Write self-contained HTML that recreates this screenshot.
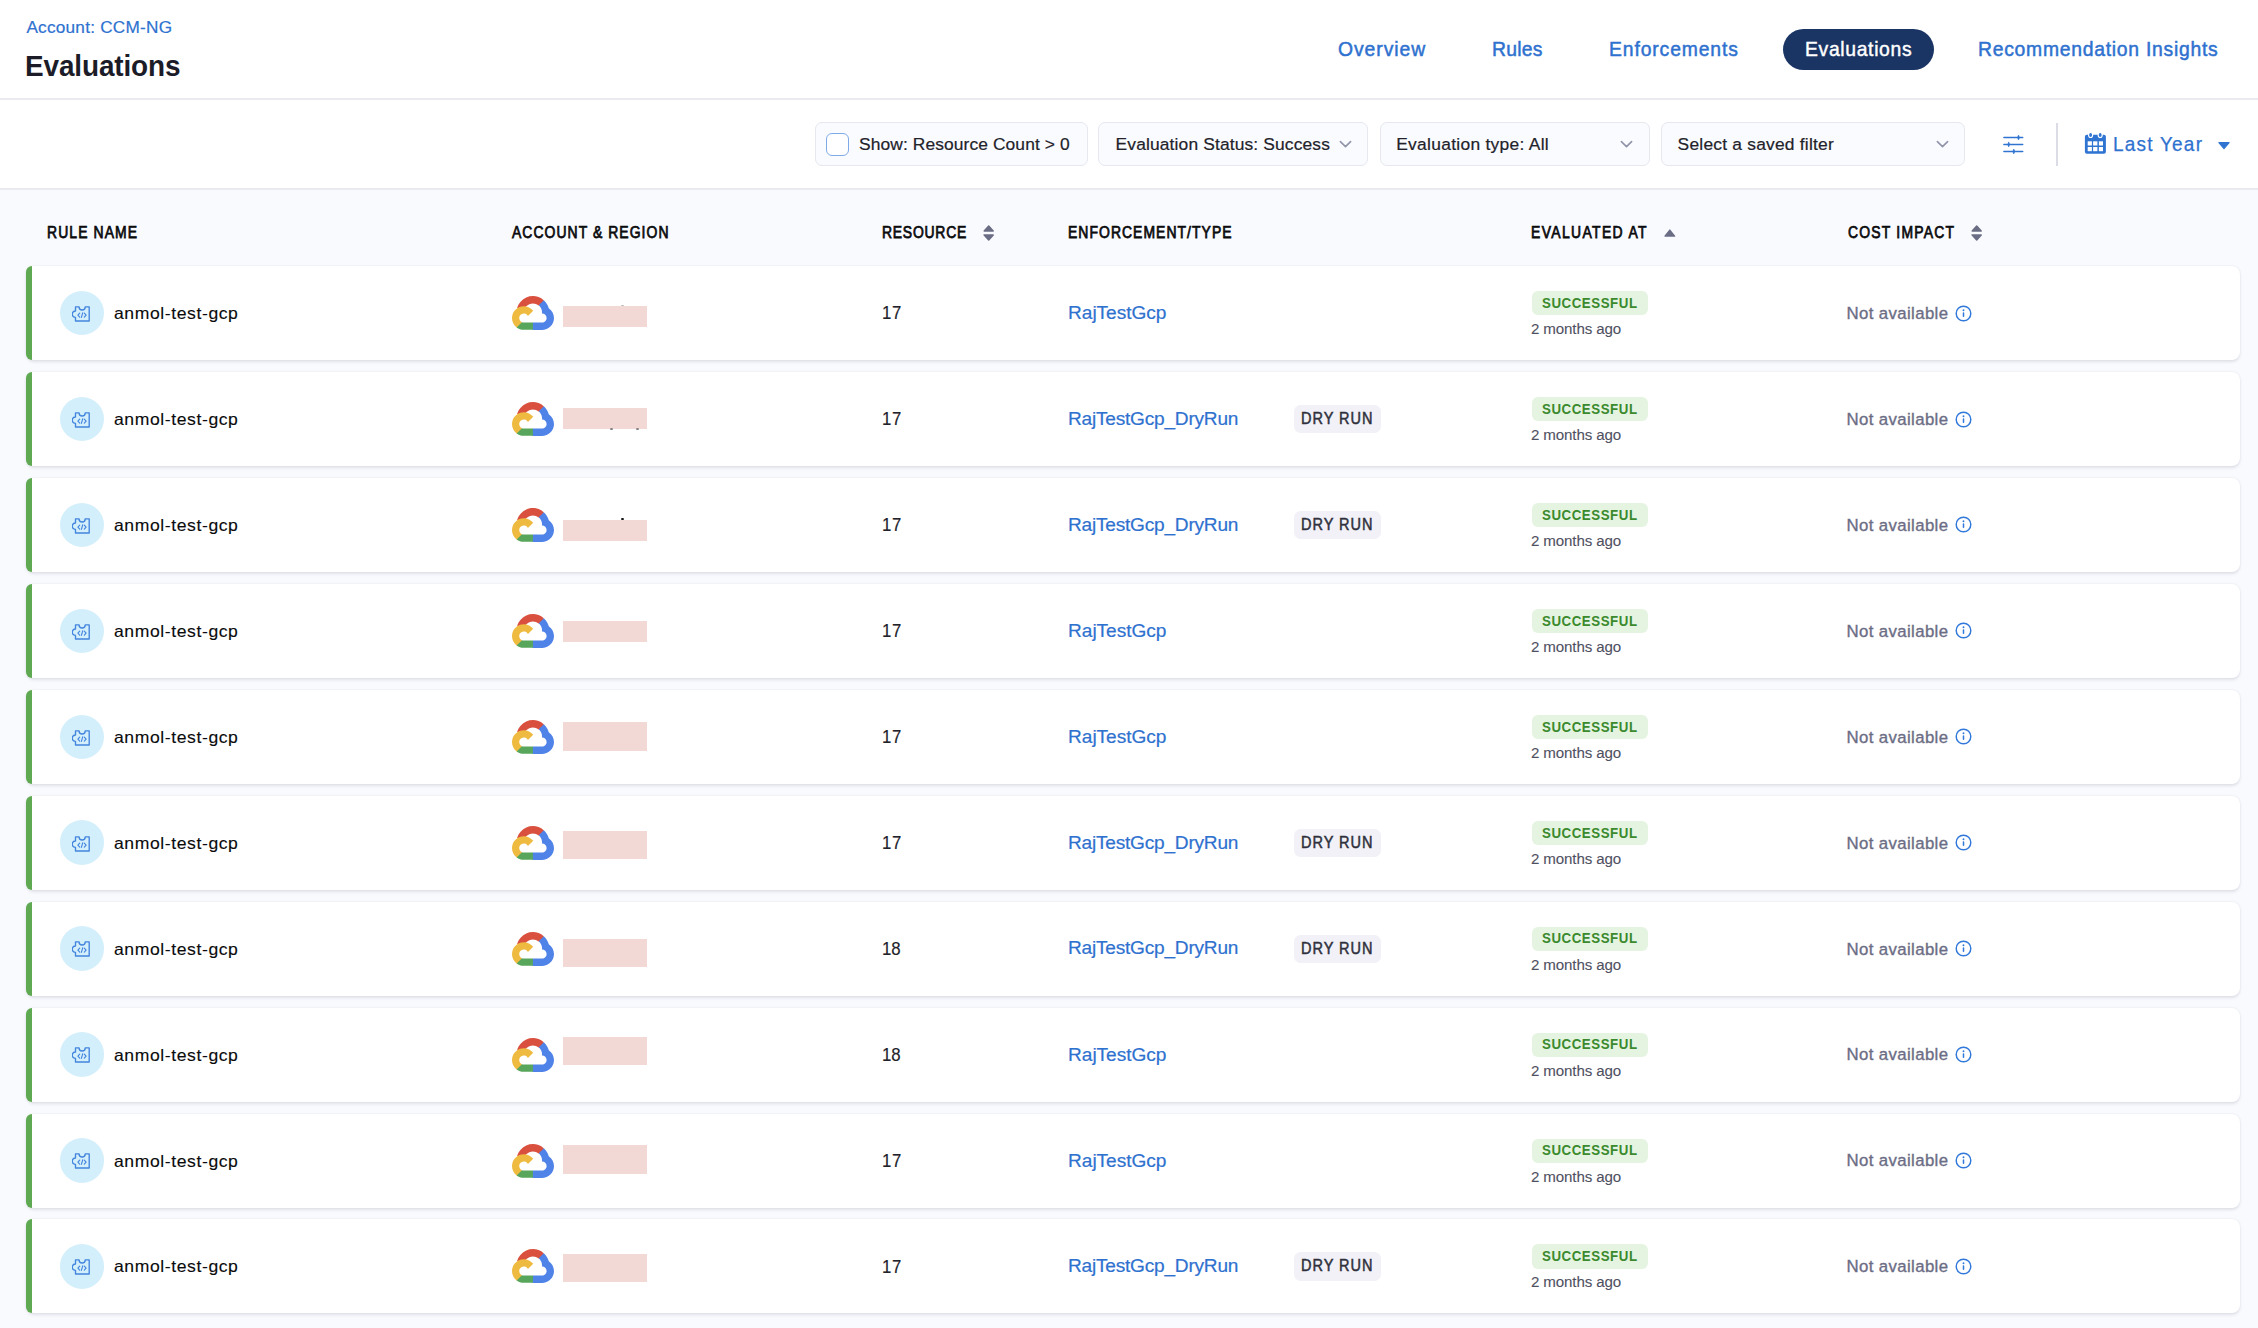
<!DOCTYPE html>
<html><head><meta charset="utf-8"><title>Evaluations</title>
<style>
*{box-sizing:border-box;margin:0;padding:0}
html,body{width:2258px;height:1328px;overflow:hidden}
body{background:#f9fafe;font-family:"Liberation Sans",sans-serif;position:relative}
.abs{position:absolute}
#header{position:absolute;left:0;top:0;width:2258px;height:100px;background:#fff;border-bottom:2px solid #eaeaf0}
#filters{position:absolute;left:0;top:100px;width:2258px;height:90px;background:#fff;border-bottom:2px solid #eaeaf0}
.pill{position:absolute;left:1782.5px;top:29.3px;width:151px;height:41px;border-radius:21px;background:#1a3464}
.fbox{position:absolute;top:122.4px;height:43.6px;background:#fafbfe;border:1.5px solid #e6e7ef;border-radius:7px}
.chk{position:absolute;left:826px;top:133px;width:22.6px;height:22.7px;border:1.8px solid #7eabe7;border-radius:6px;background:#fff}
.divider{position:absolute;left:2056.3px;top:122.6px;width:2px;height:43.6px;background:#dcdce6}
.card{position:absolute;left:26px;width:2214px;height:94px;background:#fff;border-radius:8px;
  box-shadow:0 0 2px rgba(40,41,61,.055),0 1.5px 3px rgba(96,97,112,.15)}
.bar{position:absolute;left:26px;width:6.2px;height:94px;background:#5ea952;border-radius:6px 0 0 6px}
.avatar{position:absolute;left:59.7px;width:44.5px;height:44.5px;border-radius:50%;background:#d3effb}
.code{position:absolute;left:72.2px}
.gcp{position:absolute;left:511.8px}
.pink{position:absolute;left:563px;width:84px;background:#f3d9d6}
.dry{position:absolute;left:1294.2px;width:87px;height:28.5px;border-radius:6.5px;background:#f1f1f7}
.succ{position:absolute;left:1531.7px;width:116.6px;height:24.4px;border-radius:6px;background:#e5f4e1}
.info{position:absolute;left:1954.5px}
.t{position:absolute;white-space:nowrap;line-height:80px;font-family:"Liberation Sans",sans-serif}
.dot{position:absolute;border-radius:50% 50% 40% 40%}

</style></head>
<body>
<svg width="0" height="0" style="position:absolute">
  <defs>
    <g id="gcplogo">
      <path fill="#d9503f" d="M1513.8 528.7h72.8l207.4-207.4 10.2-88c-385.9-340.6-975-303.9-1315.6 82C393.9 422.5 325.2 550 287.8 688c23.1-9.5 48.7-11 72.8-4.4l414.7-68.4s21.1-34.9 32-32.7c184.5-202.6 495-226.2 708.1-53.8h-1.6z"/>
      <path fill="#5083e8" d="M2089.4 688c-47.7-175.5-145.5-333.3-281.6-454l-291 291c122.9 100.4 192.9 251.7 189.9 410.4v51.7c143.1 0 259 116 259 259 0 143.1-116 259-259 259h-518.1l-51.7 52.4v310.7l51.7 51.7h518.1c297 2.3 560.5-190.2 648.4-473.9 87.7-283.8-20.5-591.9-266.4-758.1z"/>
      <path fill="#58a65c" d="M669.8 1917h518.1v-414.7H669.8c-36.9 0-73.4-7.9-107-23.3l-72.8 22.5-208.8 207.4-18.2 72.8c117.1 88.4 260 138.6 406.8 135.3z"/>
      <path fill="#eeba40" d="M669.8 571.6c-287.8 1.7-542.7 186-634.5 458.7-91.8 272.7-.3 573.7 227.8 749.6l300.5-300.5c-130.4-58.9-188.3-212.3-129.4-342.7 58.9-130.4 212.3-188.3 342.7-129.4 57.4 26 103.4 72 129.4 129.4l300.5-300.5c-127.9-167.1-326.6-264.8-537-264.6z"/>
    </g>
    <g id="codeicon" fill="none" stroke="#4485de" stroke-linejoin="round" stroke-linecap="round">
      <path stroke-width="1.35" d="M3.5 0.9H7.1A3.05 3.05 0 0 0 13.2 0.9H17.2V15H3.5V11.4A3.2 3.2 0 0 1 3.5 5Z"/>
      <path stroke-width="1.15" d="M7.7 7.1L5.9 9.1L7.7 11.1M10.7 6.9L9.4 11.3M12.3 7.1L14.1 9.1L12.3 11.1"/>
    </g>
    <g id="infoicon">
      <circle cx="8.5" cy="8.5" r="7.3" fill="none" stroke="#3078da" stroke-width="1.45"/>
      <circle cx="8.5" cy="5.2" r="0.95" fill="#3078da"/>
      <rect x="7.75" y="7.2" width="1.5" height="4.8" rx=".7" fill="#3078da"/>
    </g>
    <g id="sorticon" fill="#6b6d85" stroke="#6b6d85" stroke-width="1.5" stroke-linejoin="round">
      <path d="M5.7 1.1L10.2 6H1.2Z"/>
      <path d="M1.2 9.9H10.2L5.7 15Z"/>
    </g>
  </defs>
</svg>


<!-- page header: breadcrumb, title, tabs -->
<div class="page-header">
<div id="header">
  <div class="pill"></div>
</div>


<div class="t" style="left:26.40px;top:-12.90px;font-size:17.2px;font-weight:400;letter-spacing:0.236px;color:#2e71cf;-webkit-text-stroke:0.2px #2e71cf;">Account: CCM-NG</div>
<div class="t" style="left:25.30px;top:26.20px;font-size:29.4px;font-weight:700;letter-spacing:-0.126px;color:#1c1c28;transform:scaleX(0.9500);transform-origin:0 0;">Evaluations</div>
<div class="t" style="left:1338.17px;top:9.00px;font-size:20.8px;font-weight:400;letter-spacing:1.002px;color:#2e71cf;-webkit-text-stroke:0.5px #2e71cf;transform:scaleX(0.9300);transform-origin:0 0;">Overview</div>
<div class="t" style="left:1492.47px;top:9.00px;font-size:20.8px;font-weight:400;letter-spacing:0.253px;color:#2e71cf;-webkit-text-stroke:0.5px #2e71cf;transform:scaleX(0.9300);transform-origin:0 0;">Rules</div>
<div class="t" style="left:1609.37px;top:9.00px;font-size:20.8px;font-weight:400;letter-spacing:0.937px;color:#2e71cf;-webkit-text-stroke:0.5px #2e71cf;transform:scaleX(0.9300);transform-origin:0 0;">Enforcements</div>
<div class="t" style="left:1804.77px;top:9.30px;font-size:20.8px;font-weight:400;letter-spacing:0.712px;color:#ffffff;-webkit-text-stroke:0.45px #ffffff;transform:scaleX(0.9300);transform-origin:0 0;">Evaluations</div>
<div class="t" style="left:1977.67px;top:9.00px;font-size:20.8px;font-weight:400;letter-spacing:0.788px;color:#2e71cf;-webkit-text-stroke:0.5px #2e71cf;transform:scaleX(0.9300);transform-origin:0 0;">Recommendation Insights</div>
</div>
<!-- filter bar -->
<div class="filter-bar">
<div id="filters">
</div>
<div class="fbox" style="left:814.6px;width:273px"></div>
<div class="chk"></div>
<div class="fbox" style="left:1098.2px;width:269.8px"></div>
<div class="fbox" style="left:1380px;width:269.7px"></div>
<div class="fbox" style="left:1661.3px;width:303.4px"></div>
<svg class="abs" style="left:1338px;top:139px" width="15" height="10" viewBox="0 0 15 10"><path d="M2.4 2.6L7.5 7.6L12.6 2.6" fill="none" stroke="#9193aa" stroke-width="1.6" stroke-linecap="round" stroke-linejoin="round"/></svg>
<svg class="abs" style="left:1619px;top:139px" width="15" height="10" viewBox="0 0 15 10"><path d="M2.4 2.6L7.5 7.6L12.6 2.6" fill="none" stroke="#9193aa" stroke-width="1.6" stroke-linecap="round" stroke-linejoin="round"/></svg>
<svg class="abs" style="left:1934.7px;top:139px" width="15" height="10" viewBox="0 0 15 10"><path d="M2.4 2.6L7.5 7.6L12.6 2.6" fill="none" stroke="#9193aa" stroke-width="1.6" stroke-linecap="round" stroke-linejoin="round"/></svg>
<!-- sliders -->
<svg class="abs" style="left:2002px;top:133px" width="23" height="22" viewBox="0 0 23 22">
  <path d="M1.9 4.5H20.7M1.9 11.5H20.7M1.9 18.5H20.7" fill="none" stroke="#3074d2" stroke-width="1.5" stroke-linecap="round"/>
  <path d="M16.5 2.1L17.5 4.5L16.5 7L15.5 4.5Z M6.7 8.9L7.7 11.5L6.7 13.9L5.7 11.5Z M11.8 16L12.8 18.5L11.8 20.9L10.8 18.5Z" fill="#3074d2" stroke="#3074d2" stroke-width="0.6" stroke-linejoin="round"/>
</svg>
<div class="divider"></div>
<!-- calendar -->
<svg class="abs" style="left:2084px;top:131px" width="23" height="24" viewBox="0 0 23 24">
  <rect x="0.9" y="3.8" width="21" height="19" rx="2" fill="#3074d2"/>
  <g fill="#fff">
    <rect x="3.7" y="10.3" width="4.2" height="4.2"/><rect x="9.1" y="10.3" width="4.3" height="4.2"/><rect x="14.9" y="10.3" width="4.1" height="4.2"/>
    <rect x="3.7" y="16" width="4.2" height="4.2"/><rect x="9.1" y="16" width="4.3" height="4.2"/><rect x="14.9" y="16" width="4.1" height="4.2"/>
  </g>
  <ellipse cx="6.6" cy="4" rx="2.6" ry="3.1" fill="#fff"/>
  <ellipse cx="16.2" cy="4" rx="2.6" ry="3.1" fill="#fff"/>
  <ellipse cx="6.6" cy="4" rx="1.45" ry="2.1" fill="#3074d2"/>
  <ellipse cx="16.2" cy="4" rx="1.45" ry="2.1" fill="#3074d2"/>
</svg>
<svg class="abs" style="left:2217px;top:140.5px" width="14" height="9" viewBox="0 0 14 9"><path d="M1.9 1.6H12.1L7 7.6Z" fill="#3074d2" stroke="#3074d2" stroke-width="1.2" stroke-linejoin="round"/></svg>


<div class="t" style="left:859.00px;top:103.90px;font-size:17.4px;font-weight:400;letter-spacing:0.100px;color:#22222a;-webkit-text-stroke:0.2px #22222a;">Show: Resource Count &gt; 0</div>
<div class="t" style="left:1115.60px;top:103.90px;font-size:17.4px;font-weight:400;letter-spacing:0.140px;color:#22222a;-webkit-text-stroke:0.2px #22222a;">Evaluation Status: Success</div>
<div class="t" style="left:1396.20px;top:103.90px;font-size:17.4px;font-weight:400;letter-spacing:0.295px;color:#22222a;-webkit-text-stroke:0.2px #22222a;">Evaluation type: All</div>
<div class="t" style="left:1677.60px;top:103.90px;font-size:17.4px;font-weight:400;letter-spacing:0.220px;color:#22222a;-webkit-text-stroke:0.2px #22222a;">Select a saved filter</div>
<div class="t" style="left:2112.77px;top:104.30px;font-size:20.4px;font-weight:400;letter-spacing:1.328px;color:#2e71cf;-webkit-text-stroke:0.25px #2e71cf;transform:scaleX(0.9300);transform-origin:0 0;">Last Year</div>
</div>
<!-- table column headers -->
<div class="table-head">
<!-- table header sort icons -->
<svg class="abs" style="left:983px;top:225.2px" width="12" height="16" viewBox="0 0 12 16"><use href="#sorticon"/></svg>
<svg class="abs" style="left:1663.6px;top:229px" width="12" height="9" viewBox="0 0 12 9"><path d="M5.8 1.1L10.6 7.1H1Z" fill="#6b6d85" stroke="#6b6d85" stroke-width="1.4" stroke-linejoin="round"/></svg>
<svg class="abs" style="left:1970.9px;top:225.4px" width="12" height="16" viewBox="0 0 12 16"><use href="#sorticon"/></svg>

<div class="t" style="left:47.34px;top:191.90px;font-size:16.2px;font-weight:400;letter-spacing:1.288px;color:#0b0b0d;-webkit-text-stroke:0.75px #0b0b0d;transform:scaleX(0.8600);transform-origin:0 0;">RULE NAME</div>
<div class="t" style="left:512.00px;top:191.90px;font-size:16.2px;font-weight:400;letter-spacing:1.234px;color:#0b0b0d;-webkit-text-stroke:0.75px #0b0b0d;transform:scaleX(0.8600);transform-origin:0 0;">ACCOUNT &amp; REGION</div>
<div class="t" style="left:881.94px;top:191.90px;font-size:16.2px;font-weight:400;letter-spacing:0.887px;color:#0b0b0d;-webkit-text-stroke:0.75px #0b0b0d;transform:scaleX(0.8600);transform-origin:0 0;">RESOURCE</div>
<div class="t" style="left:1068.04px;top:191.90px;font-size:16.2px;font-weight:400;letter-spacing:1.228px;color:#0b0b0d;-webkit-text-stroke:0.75px #0b0b0d;transform:scaleX(0.8600);transform-origin:0 0;">ENFORCEMENT/TYPE</div>
<div class="t" style="left:1531.44px;top:191.90px;font-size:16.2px;font-weight:400;letter-spacing:1.590px;color:#0b0b0d;-webkit-text-stroke:0.75px #0b0b0d;transform:scaleX(0.8600);transform-origin:0 0;">EVALUATED AT</div>
<div class="t" style="left:1847.80px;top:191.90px;font-size:16.2px;font-weight:400;letter-spacing:1.414px;color:#0b0b0d;-webkit-text-stroke:0.75px #0b0b0d;transform:scaleX(0.8600);transform-origin:0 0;">COST IMPACT</div>
</div>
<!-- table rows -->
<div class="table-body">
<div class="row">
<div class="card" style="top:266px"></div>
<div class="bar" style="top:266px"></div>
<div class="avatar" style="top:290.75px"></div>
<svg class="code" style="top:305.80px" width="18" height="16" viewBox="0 0 18 16"><use href="#codeicon"/></svg>
<svg class="gcp" style="top:296.00px" width="42" height="34" viewBox="0 0 2385.7 1919.9"><use href="#gcplogo"/></svg>
<div class="pink" style="top:306px;height:21.0px"></div>
<div class="dot" style="left:621.3px;top:304.7px;width:2.6px;height:1.6px;background:#b8b8b8"></div>
<div class="succ" style="top:291.00px"></div>
<svg class="info" style="top:304.60px" width="17" height="17" viewBox="0 0 17 17"><use href="#infoicon"/></svg>
<div class="t" style="left:114.43px;top:273.00px;font-size:16.5px;font-weight:400;letter-spacing:0.547px;color:#0b0b0d;-webkit-text-stroke:0.12px #0b0b0d;transform:scaleX(1.0659);transform-origin:0 0;">anmol-test-gcp</div>
<div class="t" style="left:882.42px;top:273.20px;font-size:19.1px;font-weight:400;letter-spacing:0.659px;color:#22222a;-webkit-text-stroke:0.15px #22222a;transform:scaleX(0.8800);transform-origin:0 0;">17</div>
<div class="t" style="left:1068.10px;top:273.20px;font-size:19.1px;font-weight:400;letter-spacing:-0.044px;color:#2e71cf;-webkit-text-stroke:0.2px #2e71cf;">RajTestGcp</div>
<div class="t" style="left:1542.12px;top:262.80px;font-size:15.1px;font-weight:700;letter-spacing:0.634px;color:#3b8a2e;transform:scaleX(0.8800);transform-origin:0 0;">SUCCESSFUL</div>
<div class="t" style="left:1531.00px;top:289.00px;font-size:15.1px;font-weight:400;letter-spacing:-0.127px;color:#4f5162;-webkit-text-stroke:0.1px #4f5162;">2 months ago</div>
<div class="t" style="left:1846.60px;top:273.90px;font-size:16.8px;font-weight:400;letter-spacing:0.367px;color:#6b6d85;-webkit-text-stroke:0.35px #6b6d85;">Not available</div>
</div>
<div class="row">
<div class="card" style="top:372px"></div>
<div class="bar" style="top:372px"></div>
<div class="avatar" style="top:396.69px"></div>
<svg class="code" style="top:411.74px" width="18" height="16" viewBox="0 0 18 16"><use href="#codeicon"/></svg>
<svg class="gcp" style="top:401.94px" width="42" height="34" viewBox="0 0 2385.7 1919.9"><use href="#gcplogo"/></svg>
<div class="pink" style="top:408px;height:20.5px"></div>
<div class="dot" style="left:609.9px;top:428.3px;width:3px;height:1.8px;background:#808080"></div>
<div class="dot" style="left:635.6px;top:428.3px;width:3px;height:1.8px;background:#808080"></div>
<div class="dry" style="top:404.94px"></div>
<div class="succ" style="top:396.94px"></div>
<svg class="info" style="top:410.54px" width="17" height="17" viewBox="0 0 17 17"><use href="#infoicon"/></svg>
<div class="t" style="left:114.43px;top:378.94px;font-size:16.5px;font-weight:400;letter-spacing:0.547px;color:#0b0b0d;-webkit-text-stroke:0.12px #0b0b0d;transform:scaleX(1.0659);transform-origin:0 0;">anmol-test-gcp</div>
<div class="t" style="left:882.42px;top:379.14px;font-size:19.1px;font-weight:400;letter-spacing:0.659px;color:#22222a;-webkit-text-stroke:0.15px #22222a;transform:scaleX(0.8800);transform-origin:0 0;">17</div>
<div class="t" style="left:1068.00px;top:378.74px;font-size:19.1px;font-weight:400;letter-spacing:-0.225px;color:#2e71cf;-webkit-text-stroke:0.2px #2e71cf;">RajTestGcp_DryRun</div>
<div class="t" style="left:1301.33px;top:378.84px;font-size:16.7px;font-weight:400;letter-spacing:1.109px;color:#2f303c;-webkit-text-stroke:0.5px #2f303c;transform:scaleX(0.8700);transform-origin:0 0;">DRY RUN</div>
<div class="t" style="left:1542.12px;top:368.74px;font-size:15.1px;font-weight:700;letter-spacing:0.634px;color:#3b8a2e;transform:scaleX(0.8800);transform-origin:0 0;">SUCCESSFUL</div>
<div class="t" style="left:1531.00px;top:394.94px;font-size:15.1px;font-weight:400;letter-spacing:-0.127px;color:#4f5162;-webkit-text-stroke:0.1px #4f5162;">2 months ago</div>
<div class="t" style="left:1846.60px;top:379.84px;font-size:16.8px;font-weight:400;letter-spacing:0.367px;color:#6b6d85;-webkit-text-stroke:0.35px #6b6d85;">Not available</div>
</div>
<div class="row">
<div class="card" style="top:478px"></div>
<div class="bar" style="top:478px"></div>
<div class="avatar" style="top:502.63px"></div>
<svg class="code" style="top:517.68px" width="18" height="16" viewBox="0 0 18 16"><use href="#codeicon"/></svg>
<svg class="gcp" style="top:507.88px" width="42" height="34" viewBox="0 0 2385.7 1919.9"><use href="#gcplogo"/></svg>
<div class="pink" style="top:520px;height:21.0px"></div>
<div class="dot" style="left:621.1px;top:517.6px;width:3px;height:2.6px;background:#151515"></div>
<div class="dry" style="top:510.88px"></div>
<div class="succ" style="top:502.88px"></div>
<svg class="info" style="top:516.48px" width="17" height="17" viewBox="0 0 17 17"><use href="#infoicon"/></svg>
<div class="t" style="left:114.43px;top:484.88px;font-size:16.5px;font-weight:400;letter-spacing:0.547px;color:#0b0b0d;-webkit-text-stroke:0.12px #0b0b0d;transform:scaleX(1.0659);transform-origin:0 0;">anmol-test-gcp</div>
<div class="t" style="left:882.42px;top:485.08px;font-size:19.1px;font-weight:400;letter-spacing:0.659px;color:#22222a;-webkit-text-stroke:0.15px #22222a;transform:scaleX(0.8800);transform-origin:0 0;">17</div>
<div class="t" style="left:1068.00px;top:484.68px;font-size:19.1px;font-weight:400;letter-spacing:-0.225px;color:#2e71cf;-webkit-text-stroke:0.2px #2e71cf;">RajTestGcp_DryRun</div>
<div class="t" style="left:1301.33px;top:484.78px;font-size:16.7px;font-weight:400;letter-spacing:1.109px;color:#2f303c;-webkit-text-stroke:0.5px #2f303c;transform:scaleX(0.8700);transform-origin:0 0;">DRY RUN</div>
<div class="t" style="left:1542.12px;top:474.68px;font-size:15.1px;font-weight:700;letter-spacing:0.634px;color:#3b8a2e;transform:scaleX(0.8800);transform-origin:0 0;">SUCCESSFUL</div>
<div class="t" style="left:1531.00px;top:500.88px;font-size:15.1px;font-weight:400;letter-spacing:-0.127px;color:#4f5162;-webkit-text-stroke:0.1px #4f5162;">2 months ago</div>
<div class="t" style="left:1846.60px;top:485.78px;font-size:16.8px;font-weight:400;letter-spacing:0.367px;color:#6b6d85;-webkit-text-stroke:0.35px #6b6d85;">Not available</div>
</div>
<div class="row">
<div class="card" style="top:584px"></div>
<div class="bar" style="top:584px"></div>
<div class="avatar" style="top:608.57px"></div>
<svg class="code" style="top:623.62px" width="18" height="16" viewBox="0 0 18 16"><use href="#codeicon"/></svg>
<svg class="gcp" style="top:613.82px" width="42" height="34" viewBox="0 0 2385.7 1919.9"><use href="#gcplogo"/></svg>
<div class="pink" style="top:621px;height:21.4px"></div>
<div class="succ" style="top:608.82px"></div>
<svg class="info" style="top:622.42px" width="17" height="17" viewBox="0 0 17 17"><use href="#infoicon"/></svg>
<div class="t" style="left:114.43px;top:590.82px;font-size:16.5px;font-weight:400;letter-spacing:0.547px;color:#0b0b0d;-webkit-text-stroke:0.12px #0b0b0d;transform:scaleX(1.0659);transform-origin:0 0;">anmol-test-gcp</div>
<div class="t" style="left:882.42px;top:591.02px;font-size:19.1px;font-weight:400;letter-spacing:0.659px;color:#22222a;-webkit-text-stroke:0.15px #22222a;transform:scaleX(0.8800);transform-origin:0 0;">17</div>
<div class="t" style="left:1068.10px;top:591.02px;font-size:19.1px;font-weight:400;letter-spacing:-0.044px;color:#2e71cf;-webkit-text-stroke:0.2px #2e71cf;">RajTestGcp</div>
<div class="t" style="left:1542.12px;top:580.62px;font-size:15.1px;font-weight:700;letter-spacing:0.634px;color:#3b8a2e;transform:scaleX(0.8800);transform-origin:0 0;">SUCCESSFUL</div>
<div class="t" style="left:1531.00px;top:606.82px;font-size:15.1px;font-weight:400;letter-spacing:-0.127px;color:#4f5162;-webkit-text-stroke:0.1px #4f5162;">2 months ago</div>
<div class="t" style="left:1846.60px;top:591.72px;font-size:16.8px;font-weight:400;letter-spacing:0.367px;color:#6b6d85;-webkit-text-stroke:0.35px #6b6d85;">Not available</div>
</div>
<div class="row">
<div class="card" style="top:690px"></div>
<div class="bar" style="top:690px"></div>
<div class="avatar" style="top:714.51px"></div>
<svg class="code" style="top:729.56px" width="18" height="16" viewBox="0 0 18 16"><use href="#codeicon"/></svg>
<svg class="gcp" style="top:719.76px" width="42" height="34" viewBox="0 0 2385.7 1919.9"><use href="#gcplogo"/></svg>
<div class="pink" style="top:722px;height:29.0px"></div>
<div class="succ" style="top:714.76px"></div>
<svg class="info" style="top:728.36px" width="17" height="17" viewBox="0 0 17 17"><use href="#infoicon"/></svg>
<div class="t" style="left:114.43px;top:696.76px;font-size:16.5px;font-weight:400;letter-spacing:0.547px;color:#0b0b0d;-webkit-text-stroke:0.12px #0b0b0d;transform:scaleX(1.0659);transform-origin:0 0;">anmol-test-gcp</div>
<div class="t" style="left:882.42px;top:696.96px;font-size:19.1px;font-weight:400;letter-spacing:0.659px;color:#22222a;-webkit-text-stroke:0.15px #22222a;transform:scaleX(0.8800);transform-origin:0 0;">17</div>
<div class="t" style="left:1068.10px;top:696.96px;font-size:19.1px;font-weight:400;letter-spacing:-0.044px;color:#2e71cf;-webkit-text-stroke:0.2px #2e71cf;">RajTestGcp</div>
<div class="t" style="left:1542.12px;top:686.56px;font-size:15.1px;font-weight:700;letter-spacing:0.634px;color:#3b8a2e;transform:scaleX(0.8800);transform-origin:0 0;">SUCCESSFUL</div>
<div class="t" style="left:1531.00px;top:712.76px;font-size:15.1px;font-weight:400;letter-spacing:-0.127px;color:#4f5162;-webkit-text-stroke:0.1px #4f5162;">2 months ago</div>
<div class="t" style="left:1846.60px;top:697.66px;font-size:16.8px;font-weight:400;letter-spacing:0.367px;color:#6b6d85;-webkit-text-stroke:0.35px #6b6d85;">Not available</div>
</div>
<div class="row">
<div class="card" style="top:796px"></div>
<div class="bar" style="top:796px"></div>
<div class="avatar" style="top:820.45px"></div>
<svg class="code" style="top:835.50px" width="18" height="16" viewBox="0 0 18 16"><use href="#codeicon"/></svg>
<svg class="gcp" style="top:825.70px" width="42" height="34" viewBox="0 0 2385.7 1919.9"><use href="#gcplogo"/></svg>
<div class="pink" style="top:830.7px;height:28.3px"></div>
<div class="dry" style="top:828.70px"></div>
<div class="succ" style="top:820.70px"></div>
<svg class="info" style="top:834.30px" width="17" height="17" viewBox="0 0 17 17"><use href="#infoicon"/></svg>
<div class="t" style="left:114.43px;top:802.70px;font-size:16.5px;font-weight:400;letter-spacing:0.547px;color:#0b0b0d;-webkit-text-stroke:0.12px #0b0b0d;transform:scaleX(1.0659);transform-origin:0 0;">anmol-test-gcp</div>
<div class="t" style="left:882.42px;top:802.90px;font-size:19.1px;font-weight:400;letter-spacing:0.659px;color:#22222a;-webkit-text-stroke:0.15px #22222a;transform:scaleX(0.8800);transform-origin:0 0;">17</div>
<div class="t" style="left:1068.00px;top:802.50px;font-size:19.1px;font-weight:400;letter-spacing:-0.225px;color:#2e71cf;-webkit-text-stroke:0.2px #2e71cf;">RajTestGcp_DryRun</div>
<div class="t" style="left:1301.33px;top:802.60px;font-size:16.7px;font-weight:400;letter-spacing:1.109px;color:#2f303c;-webkit-text-stroke:0.5px #2f303c;transform:scaleX(0.8700);transform-origin:0 0;">DRY RUN</div>
<div class="t" style="left:1542.12px;top:792.50px;font-size:15.1px;font-weight:700;letter-spacing:0.634px;color:#3b8a2e;transform:scaleX(0.8800);transform-origin:0 0;">SUCCESSFUL</div>
<div class="t" style="left:1531.00px;top:818.70px;font-size:15.1px;font-weight:400;letter-spacing:-0.127px;color:#4f5162;-webkit-text-stroke:0.1px #4f5162;">2 months ago</div>
<div class="t" style="left:1846.60px;top:803.60px;font-size:16.8px;font-weight:400;letter-spacing:0.367px;color:#6b6d85;-webkit-text-stroke:0.35px #6b6d85;">Not available</div>
</div>
<div class="row">
<div class="card" style="top:902px"></div>
<div class="bar" style="top:902px"></div>
<div class="avatar" style="top:926.39px"></div>
<svg class="code" style="top:941.44px" width="18" height="16" viewBox="0 0 18 16"><use href="#codeicon"/></svg>
<svg class="gcp" style="top:931.64px" width="42" height="34" viewBox="0 0 2385.7 1919.9"><use href="#gcplogo"/></svg>
<div class="pink" style="top:938.8px;height:28.5px"></div>
<div class="dry" style="top:934.64px"></div>
<div class="succ" style="top:926.64px"></div>
<svg class="info" style="top:940.24px" width="17" height="17" viewBox="0 0 17 17"><use href="#infoicon"/></svg>
<div class="t" style="left:114.43px;top:908.64px;font-size:16.5px;font-weight:400;letter-spacing:0.547px;color:#0b0b0d;-webkit-text-stroke:0.12px #0b0b0d;transform:scaleX(1.0659);transform-origin:0 0;">anmol-test-gcp</div>
<div class="t" style="left:882.42px;top:908.84px;font-size:19.1px;font-weight:400;letter-spacing:0.000px;color:#22222a;-webkit-text-stroke:0.15px #22222a;transform:scaleX(0.8800);transform-origin:0 0;">18</div>
<div class="t" style="left:1068.00px;top:908.44px;font-size:19.1px;font-weight:400;letter-spacing:-0.225px;color:#2e71cf;-webkit-text-stroke:0.2px #2e71cf;">RajTestGcp_DryRun</div>
<div class="t" style="left:1301.33px;top:908.54px;font-size:16.7px;font-weight:400;letter-spacing:1.109px;color:#2f303c;-webkit-text-stroke:0.5px #2f303c;transform:scaleX(0.8700);transform-origin:0 0;">DRY RUN</div>
<div class="t" style="left:1542.12px;top:898.44px;font-size:15.1px;font-weight:700;letter-spacing:0.634px;color:#3b8a2e;transform:scaleX(0.8800);transform-origin:0 0;">SUCCESSFUL</div>
<div class="t" style="left:1531.00px;top:924.64px;font-size:15.1px;font-weight:400;letter-spacing:-0.127px;color:#4f5162;-webkit-text-stroke:0.1px #4f5162;">2 months ago</div>
<div class="t" style="left:1846.60px;top:909.54px;font-size:16.8px;font-weight:400;letter-spacing:0.367px;color:#6b6d85;-webkit-text-stroke:0.35px #6b6d85;">Not available</div>
</div>
<div class="row">
<div class="card" style="top:1008px"></div>
<div class="bar" style="top:1008px"></div>
<div class="avatar" style="top:1032.33px"></div>
<svg class="code" style="top:1047.38px" width="18" height="16" viewBox="0 0 18 16"><use href="#codeicon"/></svg>
<svg class="gcp" style="top:1037.58px" width="42" height="34" viewBox="0 0 2385.7 1919.9"><use href="#gcplogo"/></svg>
<div class="pink" style="top:1037px;height:28.0px"></div>
<div class="succ" style="top:1032.58px"></div>
<svg class="info" style="top:1046.18px" width="17" height="17" viewBox="0 0 17 17"><use href="#infoicon"/></svg>
<div class="t" style="left:114.43px;top:1014.58px;font-size:16.5px;font-weight:400;letter-spacing:0.547px;color:#0b0b0d;-webkit-text-stroke:0.12px #0b0b0d;transform:scaleX(1.0659);transform-origin:0 0;">anmol-test-gcp</div>
<div class="t" style="left:882.42px;top:1014.78px;font-size:19.1px;font-weight:400;letter-spacing:0.000px;color:#22222a;-webkit-text-stroke:0.15px #22222a;transform:scaleX(0.8800);transform-origin:0 0;">18</div>
<div class="t" style="left:1068.10px;top:1014.78px;font-size:19.1px;font-weight:400;letter-spacing:-0.044px;color:#2e71cf;-webkit-text-stroke:0.2px #2e71cf;">RajTestGcp</div>
<div class="t" style="left:1542.12px;top:1004.38px;font-size:15.1px;font-weight:700;letter-spacing:0.634px;color:#3b8a2e;transform:scaleX(0.8800);transform-origin:0 0;">SUCCESSFUL</div>
<div class="t" style="left:1531.00px;top:1030.58px;font-size:15.1px;font-weight:400;letter-spacing:-0.127px;color:#4f5162;-webkit-text-stroke:0.1px #4f5162;">2 months ago</div>
<div class="t" style="left:1846.60px;top:1015.48px;font-size:16.8px;font-weight:400;letter-spacing:0.367px;color:#6b6d85;-webkit-text-stroke:0.35px #6b6d85;">Not available</div>
</div>
<div class="row">
<div class="card" style="top:1114px"></div>
<div class="bar" style="top:1114px"></div>
<div class="avatar" style="top:1138.27px"></div>
<svg class="code" style="top:1153.32px" width="18" height="16" viewBox="0 0 18 16"><use href="#codeicon"/></svg>
<svg class="gcp" style="top:1143.52px" width="42" height="34" viewBox="0 0 2385.7 1919.9"><use href="#gcplogo"/></svg>
<div class="pink" style="top:1145px;height:28.7px"></div>
<div class="succ" style="top:1138.52px"></div>
<svg class="info" style="top:1152.12px" width="17" height="17" viewBox="0 0 17 17"><use href="#infoicon"/></svg>
<div class="t" style="left:114.43px;top:1120.52px;font-size:16.5px;font-weight:400;letter-spacing:0.547px;color:#0b0b0d;-webkit-text-stroke:0.12px #0b0b0d;transform:scaleX(1.0659);transform-origin:0 0;">anmol-test-gcp</div>
<div class="t" style="left:882.42px;top:1120.72px;font-size:19.1px;font-weight:400;letter-spacing:0.659px;color:#22222a;-webkit-text-stroke:0.15px #22222a;transform:scaleX(0.8800);transform-origin:0 0;">17</div>
<div class="t" style="left:1068.10px;top:1120.72px;font-size:19.1px;font-weight:400;letter-spacing:-0.044px;color:#2e71cf;-webkit-text-stroke:0.2px #2e71cf;">RajTestGcp</div>
<div class="t" style="left:1542.12px;top:1110.32px;font-size:15.1px;font-weight:700;letter-spacing:0.634px;color:#3b8a2e;transform:scaleX(0.8800);transform-origin:0 0;">SUCCESSFUL</div>
<div class="t" style="left:1531.00px;top:1136.52px;font-size:15.1px;font-weight:400;letter-spacing:-0.127px;color:#4f5162;-webkit-text-stroke:0.1px #4f5162;">2 months ago</div>
<div class="t" style="left:1846.60px;top:1121.42px;font-size:16.8px;font-weight:400;letter-spacing:0.367px;color:#6b6d85;-webkit-text-stroke:0.35px #6b6d85;">Not available</div>
</div>
<div class="row">
<div class="card" style="top:1219px"></div>
<div class="bar" style="top:1219px"></div>
<div class="avatar" style="top:1244.21px"></div>
<svg class="code" style="top:1259.26px" width="18" height="16" viewBox="0 0 18 16"><use href="#codeicon"/></svg>
<svg class="gcp" style="top:1249.46px" width="42" height="34" viewBox="0 0 2385.7 1919.9"><use href="#gcplogo"/></svg>
<div class="pink" style="top:1253.6px;height:28.2px"></div>
<div class="dry" style="top:1252.46px"></div>
<div class="succ" style="top:1244.46px"></div>
<svg class="info" style="top:1258.06px" width="17" height="17" viewBox="0 0 17 17"><use href="#infoicon"/></svg>
<div class="t" style="left:114.43px;top:1226.46px;font-size:16.5px;font-weight:400;letter-spacing:0.547px;color:#0b0b0d;-webkit-text-stroke:0.12px #0b0b0d;transform:scaleX(1.0659);transform-origin:0 0;">anmol-test-gcp</div>
<div class="t" style="left:882.42px;top:1226.66px;font-size:19.1px;font-weight:400;letter-spacing:0.659px;color:#22222a;-webkit-text-stroke:0.15px #22222a;transform:scaleX(0.8800);transform-origin:0 0;">17</div>
<div class="t" style="left:1068.00px;top:1226.26px;font-size:19.1px;font-weight:400;letter-spacing:-0.225px;color:#2e71cf;-webkit-text-stroke:0.2px #2e71cf;">RajTestGcp_DryRun</div>
<div class="t" style="left:1301.33px;top:1226.36px;font-size:16.7px;font-weight:400;letter-spacing:1.109px;color:#2f303c;-webkit-text-stroke:0.5px #2f303c;transform:scaleX(0.8700);transform-origin:0 0;">DRY RUN</div>
<div class="t" style="left:1542.12px;top:1216.26px;font-size:15.1px;font-weight:700;letter-spacing:0.634px;color:#3b8a2e;transform:scaleX(0.8800);transform-origin:0 0;">SUCCESSFUL</div>
<div class="t" style="left:1531.00px;top:1242.46px;font-size:15.1px;font-weight:400;letter-spacing:-0.127px;color:#4f5162;-webkit-text-stroke:0.1px #4f5162;">2 months ago</div>
<div class="t" style="left:1846.60px;top:1227.36px;font-size:16.8px;font-weight:400;letter-spacing:0.367px;color:#6b6d85;-webkit-text-stroke:0.35px #6b6d85;">Not available</div>
</div>
</div>
</body></html>
